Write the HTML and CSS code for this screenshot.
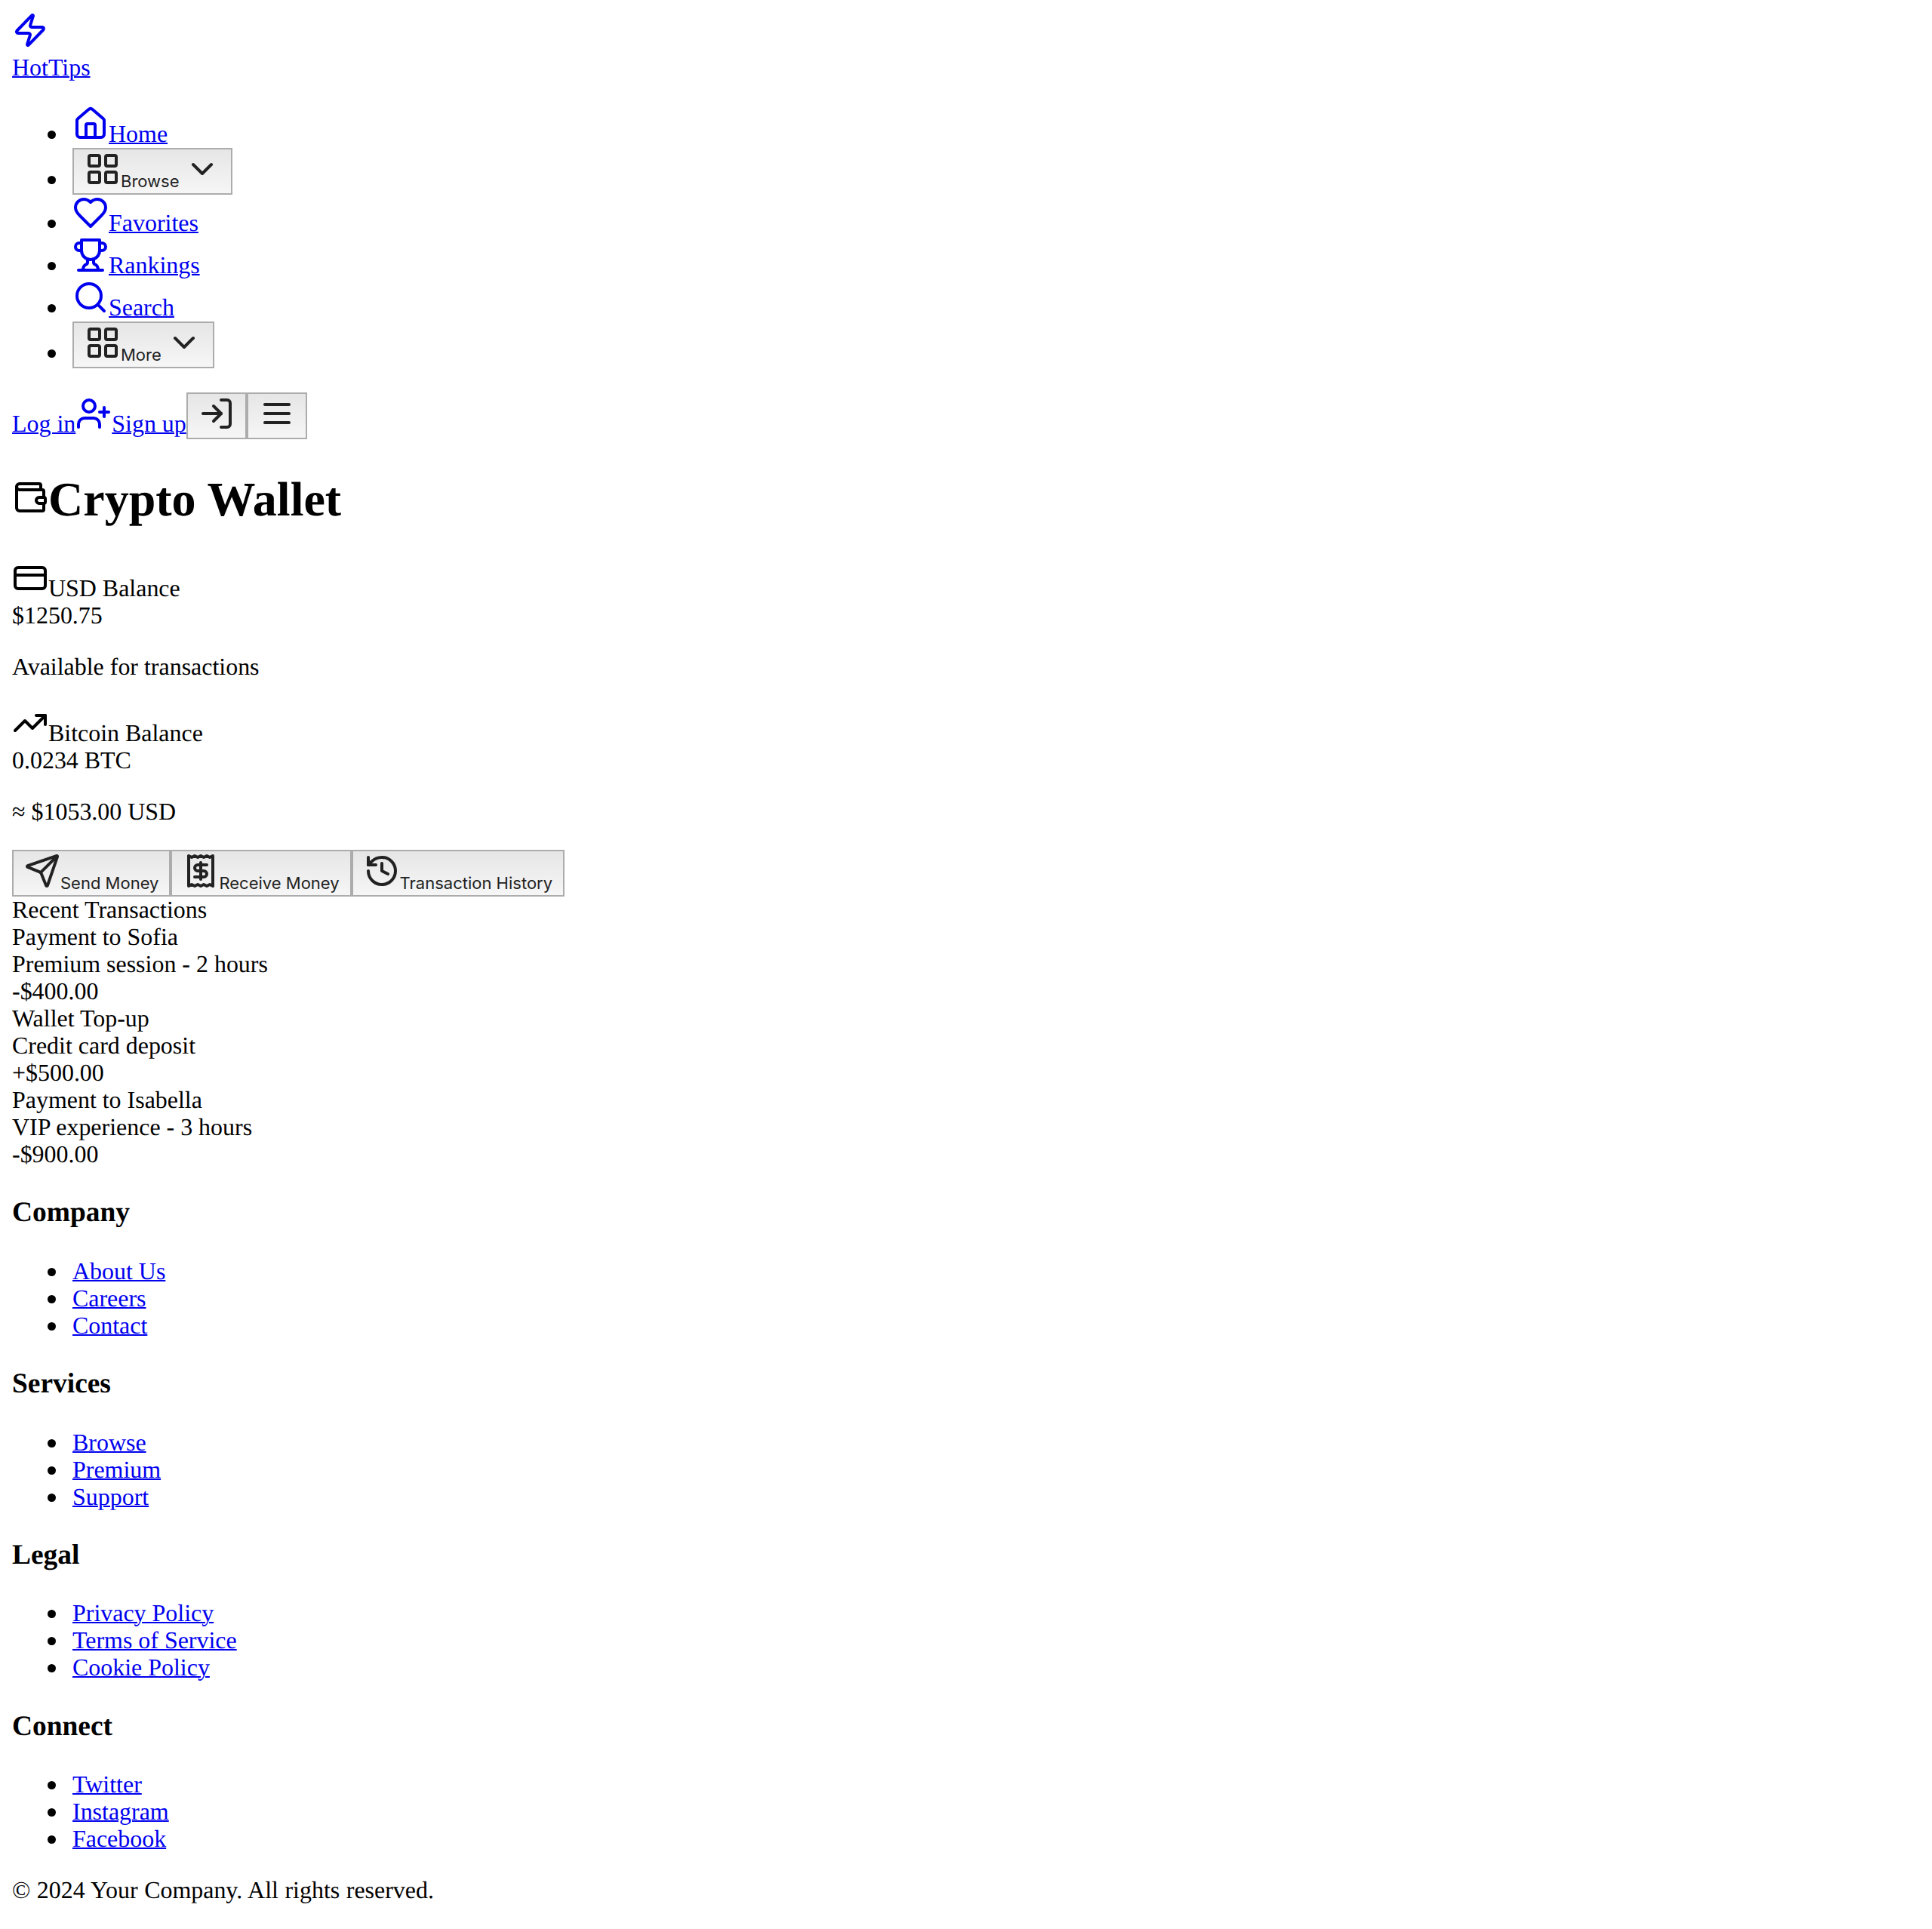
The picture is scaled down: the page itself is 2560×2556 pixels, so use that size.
FILE: index.html
```html
<!DOCTYPE html>
<html lang="en">
<head>
  <meta charset="UTF-8">
  <meta name="viewport" content="width=device-width, initial-scale=1.0">
  <title>HotTips | Crypto Wallet</title>
  <link rel="stylesheet" href="styles.css">
</head>
<body>
  <header>
    <a href="#" class="link brand">
      <span class="brand-icon"><svg class="icon" viewBox="0 0 24 24"><path d="M4 14a1 1 0 0 1-.78-1.63l9.9-10.2a.5.5 0 0 1 .86.46l-1.92 6.02A1 1 0 0 0 13 10h7a1 1 0 0 1 .78 1.63l-9.9 10.2a.5.5 0 0 1-.86-.46l1.92-6.02A1 1 0 0 0 11 14z"/></svg></span>
      <span>HotTips</span>
    </a>

    <ul class="list">
      <li><a href="#" class="link"><svg class="icon" viewBox="0 0 24 24"><path d="M15 21v-8a1 1 0 0 0-1-1h-4a1 1 0 0 0-1 1v8"/><path d="M3 10a2 2 0 0 1 .709-1.528l7-5.999a2 2 0 0 1 2.582 0l7 5.999A2 2 0 0 1 21 10v9a2 2 0 0 1-2 2H5a2 2 0 0 1-2-2z"/></svg><span>Home</span></a></li>
      <li><button class="btn"><svg class="icon" viewBox="0 0 24 24"><rect x="3" y="3" width="7" height="7" rx="1"/><rect x="14" y="3" width="7" height="7" rx="1"/><rect x="14" y="14" width="7" height="7" rx="1"/><rect x="3" y="14" width="7" height="7" rx="1"/></svg><span>Browse</span> <svg class="icon" viewBox="0 0 24 24"><path d="m6 9 6 6 6-6"/></svg></button></li>
      <li><a href="#" class="link"><svg class="icon" viewBox="0 0 24 24"><path d="M19 14c1.49-1.46 3-3.21 3-5.5A5.5 5.5 0 0 0 16.5 3c-1.76 0-3 .5-4.5 2-1.5-1.5-2.74-2-4.5-2A5.5 5.5 0 0 0 2 8.5c0 2.3 1.5 4.05 3 5.5l7 7Z"/></svg><span>Favorites</span></a></li>
      <li><a href="#" class="link"><svg class="icon" viewBox="0 0 24 24"><path d="M6 9H4.5a2.5 2.5 0 0 1 0-5H6"/><path d="M18 9h1.5a2.5 2.5 0 0 0 0-5H18"/><path d="M4 22h16"/><path d="M10 14.66V17c0 .55-.47.98-.97 1.21C7.85 18.75 7 20.24 7 22"/><path d="M14 14.66V17c0 .55.47.98.97 1.21C16.15 18.75 17 20.24 17 22"/><path d="M18 2H6v7a6 6 0 0 0 12 0V2Z"/></svg><span>Rankings</span></a></li>
      <li><a href="#" class="link"><svg class="icon" viewBox="0 0 24 24"><circle cx="11" cy="11" r="8"/><path d="m21 21-4.3-4.3"/></svg><span>Search</span></a></li>
      <li><button class="btn"><svg class="icon" viewBox="0 0 24 24"><rect x="3" y="3" width="7" height="7" rx="1"/><rect x="14" y="3" width="7" height="7" rx="1"/><rect x="14" y="14" width="7" height="7" rx="1"/><rect x="3" y="14" width="7" height="7" rx="1"/></svg><span>More</span> <svg class="icon" viewBox="0 0 24 24"><path d="m6 9 6 6 6-6"/></svg></button></li>
    </ul>

    <div class="account">
      <a href="#" class="link">Log in</a><a href="#" class="link"><svg class="icon" viewBox="0 0 24 24"><path d="M16 21v-2a4 4 0 0 0-4-4H6a4 4 0 0 0-4 4v2"/><circle cx="9" cy="7" r="4"/><path d="M19 8v6"/><path d="M22 11h-6"/></svg><span>Sign up</span></a><button class="btn"><svg class="icon" viewBox="0 0 24 24"><path d="M15 3h4a2 2 0 0 1 2 2v14a2 2 0 0 1-2 2h-4"/><path d="m10 17 5-5-5-5"/><path d="M15 12H3"/></svg></button><button class="btn"><svg class="icon" viewBox="0 0 24 24"><path d="M4 12h16"/><path d="M4 6h16"/><path d="M4 18h16"/></svg></button>
    </div>
  </header>

  <main>
    <h1 class="page-title"><svg class="icon" viewBox="0 0 24 24"><path d="M19 7V4a1 1 0 0 0-1-1H5a2 2 0 0 0 0 4h15a1 1 0 0 1 1 1v4h-3a2 2 0 0 0 0 4h3a1 1 0 0 0 1-1v-2a1 1 0 0 0-1-1"/><path d="M3 5v14a2 2 0 0 0 2 2h15a1 1 0 0 0 1-1v-4"/></svg>Crypto Wallet</h1>

    <section class="balance">
      <div><svg class="icon" viewBox="0 0 24 24"><rect x="2" y="5" width="20" height="14" rx="2"/><path d="M2 10h20"/></svg>USD Balance</div>
      <div>$1250.75</div>
      <p class="note">Available for transactions</p>
    </section>

    <section class="balance">
      <div><svg class="icon" viewBox="0 0 24 24"><path d="M22 7 13.5 15.5 8.5 10.5 2 17"/><path d="M16 7h6v6"/></svg>Bitcoin Balance</div>
      <div>0.0234 BTC</div>
      <p class="note">≈ $1053.00 USD</p>
    </section>

    <div class="actions">
      <button class="btn"><svg class="icon" viewBox="0 0 24 24"><path d="M14.536 21.686a.5.5 0 0 0 .937-.024l6.5-19a.496.496 0 0 0-.635-.635l-19 6.5a.5.5 0 0 0-.024.937l7.93 3.18a2 2 0 0 1 1.112 1.11z"/><path d="m21.854 2.147-10.94 10.939"/></svg><span>Send Money</span></button><button class="btn"><svg class="icon" viewBox="0 0 24 24"><path d="M4 2v20l2-1 2 1 2-1 2 1 2-1 2 1 2-1 2 1V2l-2 1-2-1-2 1-2-1-2 1-2-1-2 1Z"/><path d="M16 8h-6a2 2 0 1 0 0 4h4a2 2 0 1 1 0 4H8"/><path d="M12 17.5v-11"/></svg><span>Receive Money</span></button><button class="btn"><svg class="icon" viewBox="0 0 24 24"><path d="M3 12a9 9 0 1 0 9-9 9.75 9.75 0 0 0-6.74 2.74L3 8"/><path d="M3 3v5h5"/><path d="M12 7v5l4 2"/></svg><span>Transaction History</span></button>
    </div>

    <div>Recent Transactions</div>
    <div class="transaction">
      <div>Payment to Sofia</div>
      <div>Premium session - 2 hours</div>
      <div>-$400.00</div>
    </div>
    <div class="transaction">
      <div>Wallet Top-up</div>
      <div>Credit card deposit</div>
      <div>+$500.00</div>
    </div>
    <div class="transaction">
      <div>Payment to Isabella</div>
      <div>VIP experience - 3 hours</div>
      <div>-$900.00</div>
    </div>
  </main>

  <footer>
    <h3 class="footer-title">Company</h3>
    <ul class="list">
      <li><a href="#" class="link">About Us</a></li>
      <li><a href="#" class="link">Careers</a></li>
      <li><a href="#" class="link">Contact</a></li>
    </ul>
    <h3 class="footer-title">Services</h3>
    <ul class="list">
      <li><a href="#" class="link">Browse</a></li>
      <li><a href="#" class="link">Premium</a></li>
      <li><a href="#" class="link">Support</a></li>
    </ul>
    <h3 class="footer-title">Legal</h3>
    <ul class="list">
      <li><a href="#" class="link">Privacy Policy</a></li>
      <li><a href="#" class="link">Terms of Service</a></li>
      <li><a href="#" class="link">Cookie Policy</a></li>
    </ul>
    <h3 class="footer-title">Connect</h3>
    <ul class="list">
      <li><a href="#" class="link">Twitter</a></li>
      <li><a href="#" class="link">Instagram</a></li>
      <li><a href="#" class="link">Facebook</a></li>
    </ul>
    <p class="copyright">© 2024 Your Company. All rights reserved.</p>
  </footer>
</body>
</html>
```

FILE: styles.css
```css
/* 31.95px, not 32: the ascent rounds down, so text sits 28px into its 36px line */
body {
  margin: 16px;
  background: #fff;
  color: #000;
  font-family: 'Liberation Serif', serif;
  font-size: 31.95px;
  line-height: 36px;
  text-rendering: geometricPrecision;
}
.link {
  color: #0000ee;
  text-decoration: underline;
  text-decoration-thickness: 2px;
}
.icon {
  width: 48px;
  height: 48px;
  fill: none;
  stroke: currentColor;
  stroke-width: 2;
  stroke-linecap: round;
  stroke-linejoin: round;
}
.brand {
  display: block;
}
.brand-icon {
  display: block;
}
.list {
  margin: 32px 0;
  padding-left: 80px;
  list-style: none;
}
.list li::before {
  content: "";
  display: inline-block;
  width: 11px;
  height: 11px;
  margin: 0 22px 4px -33px;
  border-radius: 50%;
  background: #000;
}
.btn {
  margin: 0;
  padding: 2px 14px;
  border: 2px solid #acacac;
  background: linear-gradient(#e6e6e6, #f6f6f6);
  color: #222;
  font-family: 'Inter', sans-serif;
  font-size: 22px;
  line-height: 28px;
}
.account {
  margin-bottom: 32px;
}
.page-title {
  margin: 42.88px 0;
  font-size: 64px;
  line-height: 74px;
  font-weight: bold;
}
.balance {
  margin-bottom: 32px;
}
.note {
  margin: 32px 0;
}
.footer-title {
  margin: 37.44px 0;
  font-size: 37.44px;
  line-height: 44px;
  font-weight: bold;
}
.copyright {
  margin: 32px 0 0;
  word-spacing: 0.6px;
}
```
